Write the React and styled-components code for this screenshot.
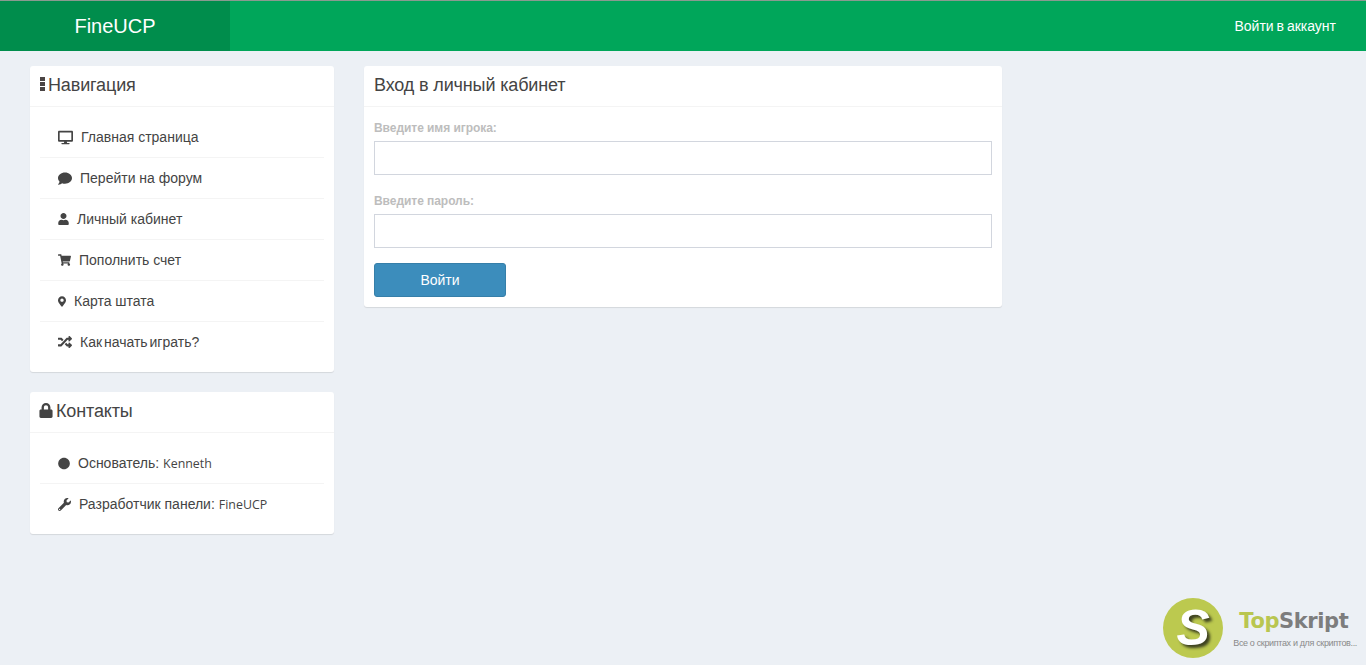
import { createGlobalStyle, styled } from 'styled-components'
import {
    FaDesktop, FaComment, FaUser, FaShoppingCart, FaMapMarkerAlt, FaRandom,
    FaCircle, FaWrench, FaLock,
} from 'react-icons/fa'

const GlobalStyle = createGlobalStyle`
    html, body {
        margin: 0;
        height: 100%;
    }
    body {
        background-color: #ecf0f5;
        font-family: "Liberation Sans", Arial, sans-serif;
        color: #444;
        overflow: hidden;
    }
    * {
        box-sizing: border-box;
    }
`

const Page = styled.div`
    min-height: 665px;
`

const TopBar = styled.header`
    height: 51px;
    background-color: #00a65a;
    border-top: 1px solid #8a9a90;
    display: flex;
    align-items: center;
    justify-content: space-between;
`

const Brand = styled.div`
    width: 230px;
    height: 100%;
    background-color: #008d4c;
    color: #fff;
    font-size: 20px;
    display: flex;
    align-items: center;
    justify-content: center;
`

const AccountLink = styled.a`
    color: #fff;
    font-size: 14px;
    word-spacing: -1px;
    padding-right: 30px;
`

const Columns = styled.main`
    display: flex;
    align-items: flex-start;
    gap: 30px;
    padding: 15px 30px 0;
`

const Sidebar = styled.aside`
    width: 304px;
    display: flex;
    flex-direction: column;
    gap: 20px;
`

const Card = styled.section`
    background-color: #fff;
    border-radius: 3px;
    box-shadow: 0 1px 1px rgba(0, 0, 0, 0.1);
    width: ${props => props.$width || 'auto'};
`

const CardHeader = styled.h3`
    margin: 0;
    height: 41px;
    padding: 0 10px 2px;
    display: flex;
    align-items: center;
    gap: 3px;
    font-size: 18px;
    font-weight: 400;
    letter-spacing: -0.14px;
    color: #444;
    border-bottom: 1px solid #f4f4f4;
`

const DotsIcon = styled.svg`
    width: 5px;
    height: 14px;
    margin-bottom: 2px;
    fill: #4a4444;
`

const LockIcon = styled(FaLock)`
    width: 14px;
    height: 15px;
    margin-left: -1px;
    margin-bottom: 2px;
`

const List = styled.ul`
    list-style: none;
    margin: 0;
    padding: 10px;
`

const Row = styled.li`
    height: 41px;
    padding-left: 18px;
    display: flex;
    align-items: center;
    font-size: 14px;
    color: #444;
    border-bottom: 1px solid #f4f4f4;
    word-spacing: ${props => props.$wordSpacing || 0}px;
    &:last-child {
        height: 40px;
        border-bottom: 0;
    }
`

const IconSlot = styled.span`
    width: ${props => props.$width}px;
    margin-right: 8px;
    display: flex;
    align-items: center;
    justify-content: center;
    flex: none;
`

const Latin = styled.span`
    font-family: "Open Sans", sans-serif;
    font-size: 12.4px;
    margin-left: 4px;
`

const CardBody = styled.form`
    padding: 10px;
`

const Field = styled.div`
    margin-bottom: 15px;
`

const Label = styled.label`
    display: block;
    height: 20px;
    line-height: 22px;
    margin-bottom: 4px;
    font-size: 12px;
    font-weight: 700;
    letter-spacing: -0.05px;
    color: #bdbdbd;
`

const Input = styled.input`
    display: block;
    width: 100%;
    height: 34px;
    padding: 6px 12px;
    border: 1px solid #d2d6de;
    background-color: #fff;
    outline: none;
`

const Button = styled.button`
    display: block;
    width: 132px;
    height: 34px;
    background-color: #3c8dbc;
    border: 1px solid #367fa9;
    border-radius: 3px;
    color: #fff;
    font-family: inherit;
    font-size: 14px;
`

const Watermark = styled.div`
    position: absolute;
    right: 9px;
    bottom: 7px;
    display: flex;
    align-items: center;
    gap: 10px;
`

const LogoCircle = styled.div`
    width: 60px;
    height: 60px;
    border-radius: 50%;
    background-color: #bcc94f;
    color: #fff;
    font-family: "Liberation Sans", sans-serif;
    font-size: 50px;
    font-style: italic;
    font-weight: 700;
    display: flex;
    align-items: center;
    justify-content: center;
    text-shadow: 3px 3px 3px #3c4020;
`

const LogoText = styled.div`
    display: flex;
    flex-direction: column;
`

const LogoName = styled.div`
    font-family: "DejaVu Sans", sans-serif;
    font-size: 21px;
    font-weight: 700;
    letter-spacing: -0.4px;
    padding-left: 6px;
    color: #7d7d7d;
    & > span {
        color: #b9c650;
    }
`

const LogoTag = styled.div`
    font-size: 9px;
    letter-spacing: -0.35px;
    color: #8a8a8a;
    margin-top: 5px;
    white-space: nowrap;
`

const navItems = [
    { icon: FaDesktop, size: 15, width: 15, text: 'Главная страница' },
    { icon: FaComment, size: 15, width: 14, text: 'Перейти на форум' },
    { icon: FaUser, size: 12, width: 11, text: 'Личный кабинет' },
    { icon: FaShoppingCart, size: 14, width: 13, text: 'Пополнить счет' },
    { icon: FaMapMarkerAlt, size: 13, width: 8, text: 'Карта штата' },
    { icon: FaRandom, size: 14, width: 14, text: 'Как начать играть?', wordSpacing: -2 },
]

export default function App() {
    return (
        <Page>
            <GlobalStyle />
            <TopBar>
                <Brand>FineUCP</Brand>
                <AccountLink>Войти в аккаунт</AccountLink>
            </TopBar>
            <Columns>
                <Sidebar>
                    <Card>
                        <CardHeader>
                            <DotsIcon viewBox="0 0 5 14">
                                <rect width="5" height="4" />
                                <rect y="5" width="5" height="4" />
                                <rect y="10" width="5" height="4" />
                            </DotsIcon>
                            Навигация
                        </CardHeader>
                        <List>
                            {navItems.map(item => (
                                <Row key={item.text} $wordSpacing={item.wordSpacing}>
                                    <IconSlot $width={item.width}><item.icon size={item.size} /></IconSlot>
                                    {item.text}
                                </Row>
                            ))}
                        </List>
                    </Card>
                    <Card>
                        <CardHeader><LockIcon />Контакты</CardHeader>
                        <List>
                            <Row>
                                <IconSlot $width={12}><FaCircle size={13} /></IconSlot>
                                Основатель:<Latin>Kenneth</Latin>
                            </Row>
                            <Row>
                                <IconSlot $width={13}><FaWrench size={13} /></IconSlot>
                                Разработчик панели:<Latin>FineUCP</Latin>
                            </Row>
                        </List>
                    </Card>
                </Sidebar>
                <Card $width="638px">
                    <CardHeader>Вход в личный кабинет</CardHeader>
                    <CardBody>
                        <Field>
                            <Label>Введите имя игрока:</Label>
                            <Input type="text" />
                        </Field>
                        <Field>
                            <Label>Введите пароль:</Label>
                            <Input type="password" />
                        </Field>
                        <Button type="button">Войти</Button>
                    </CardBody>
                </Card>
            </Columns>
            <Watermark>
                <LogoCircle>S</LogoCircle>
                <LogoText>
                    <LogoName><span>Top</span>Skript</LogoName>
                    <LogoTag>Все о скриптах и для скриптов...</LogoTag>
                </LogoText>
            </Watermark>
        </Page>
    )
}
